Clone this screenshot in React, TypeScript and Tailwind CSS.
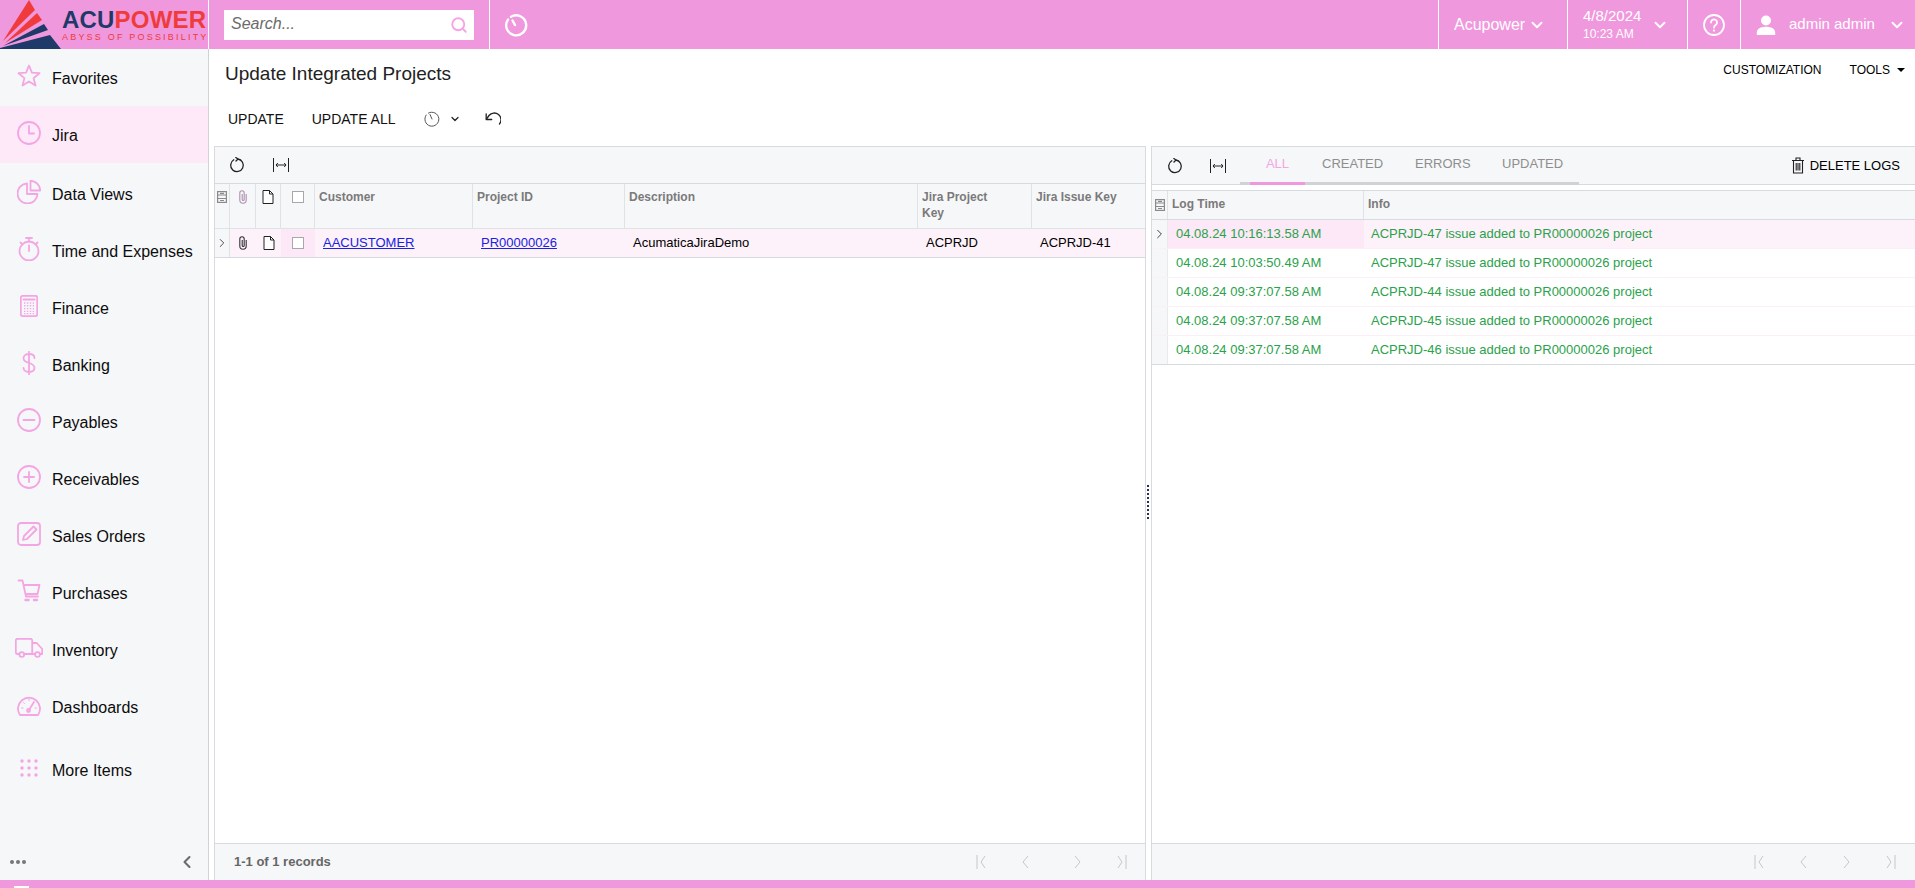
import React from "react";
import { ChevronDown, ChevronLeft, ChevronRight, Search } from "lucide-react";

const P = "#f4a5e3";

function Ic({ children, w = 24, h = 24, vb = "0 0 24 24", sw = 1.8, color = P, fill = "none" }: { children: React.ReactNode; w?: number; h?: number; vb?: string; sw?: number; color?: string; fill?: string }) {
  return (
    <svg width={w} height={h} viewBox={vb} fill={fill} stroke={color} strokeWidth={sw} strokeLinecap="round" strokeLinejoin="round" className="shrink-0">
      {children}
    </svg>
  );
}

const navIcons: Record<string, React.ReactNode> = {
  Favorites: <Ic><path d="M12 1.500l2.900 7.200 7.600.5-5.900 4.900 1.900 7.500L12 17.500l-6.500 4.100 1.900-7.500-5.900-4.900 7.600-.5z" /></Ic>,
  Jira: <Ic><circle cx="12" cy="12" r="11" /><path d="M12 5v7.500h5" /></Ic>,
  "Data Views": <Ic><path d="M10 3.500a10 10 0 1 0 10.500 10.500H10z" /><path d="M13.500 0.800a10 10 0 0 1 9.700 9.700h-9.700z" /></Ic>,
  "Time and Expenses": <Ic><circle cx="12" cy="14" r="9.500" /><path d="M9 1h6M12 1v3.500M12 8.500V14M3.500 5.500l2 2M20.500 5.500l-2 2" /></Ic>,
  Finance: <Ic w={18} h={22} vb="0 0 18 22"><rect x="0.800" y="0.800" width="16.400" height="20.400" rx="2" /><path d="M3.500 4.500h11" strokeWidth="2" /><path d="M4 8h10M4 10.800h10M4 13.600h10M4 16.400h10M4 18.600h10" strokeWidth="1.400" strokeDasharray="1.400 1.500" strokeLinecap="butt" /></Ic>,
  Banking: <Ic w={14} h={24} vb="0 0 14 24"><path d="M12.500 7c0-2.500-2.300-4-5.500-4S1.500 4.700 1.500 7.200c0 6 11 3.600 11 9.600 0 2.600-2.400 4.200-5.500 4.200s-5.500-1.600-5.500-4.200M7 .8v22.400" /></Ic>,
  Payables: <Ic><circle cx="12" cy="12" r="11" /><path d="M6.500 12h11" /></Ic>,
  Receivables: <Ic><circle cx="12" cy="12" r="11" /><path d="M7 12h10M12 7v10" /></Ic>,
  "Sales Orders": <Ic><rect x="1" y="1" width="22" height="22" rx="3" /><path d="M6 18l1-4L16.500 4.500l3 3L10 17z" /></Ic>,
  Purchases: <Ic><path d="M1.500 1.500h4l3.500 16h12M6.500 6h16l-2 9H8.500" /><path d="M8.500 21h3M17 21h3" strokeWidth="2.400" /></Ic>,
  Inventory: <Ic w={28} h={20} vb="0 0 28 20"><path d="M4.500 16H2.500a1.700 1.700 0 0 1-1.700-1.700V2.500A1.700 1.700 0 0 1 2.500.8h13a1.700 1.700 0 0 1 1.700 1.700V16H9M17.200 5h4.500l5.500 6v5h-2M20 16h-2.800" /><circle cx="6.800" cy="16.500" r="2.400" /><circle cx="22.500" cy="16.500" r="2.400" /></Ic>,
  Dashboards: <Ic h={21} vb="0 0 24 21"><path d="M3 20a11 11 0 1 1 18 0z" /><path d="M12 15l5-8" /><circle cx="11.500" cy="15.500" r="1.500" /><path d="M4.500 13h1.500M6.500 7.500l1 1M12 4v1.500M18 13h1.500" strokeWidth="1" /></Ic>,
  "More Items": (
    <svg width="18" height="18" viewBox="0 0 18 18" fill={P} className="shrink-0">
      {[2, 9, 16].flatMap((y) => [2, 9, 16].map((x) => <circle key={`${x}-${y}`} cx={x} cy={y} r="1.700" />))}
    </svg>
  ),
};

const navTop = ["Favorites", "Jira", "Data Views", "Time and Expenses", "Finance", "Banking", "Payables", "Receivables", "Sales Orders", "Purchases", "Inventory", "Dashboards"];

function NavItem({ label, active, extra }: { label: string; active?: boolean; extra?: string }) {
  return (
    <div className={`relative flex items-center h-[57px] shrink-0 pl-[52px] pt-[2px] text-[16px] text-[#0c0c0c] ${active ? "bg-[#fde9f8]" : ""} ${extra ?? ""}`}>
      <span className="absolute left-[17px] top-[15px] w-[24px] h-[24px] flex items-center justify-center">{navIcons[label]}</span>
      {label}
    </div>
  );
}

function Logo() {
  return (
    <div className="relative w-[208px] h-[49px] shrink-0 overflow-hidden">
      <svg width="62" height="49" viewBox="0 0 62 49" className="absolute left-0 top-0">
        <path d="M29 0L35 10 3 41z" fill="#ef3b3b" />
        <path d="M37 13L42 20 5 43z" fill="#ef3b3b" />
        <path d="M44 24L48 30 3 46z" fill="#1f3a68" />
        <path d="M50 35L61 49 H0 V48z" fill="#1f3a68" />
      </svg>
      <div className="absolute left-[62px] top-[6px] text-[24px] leading-[28px] font-bold whitespace-nowrap tracking-[0.2px]">
        <span className="text-[#1f3a68]">ACU</span>
        <span className="text-[#ef3b3b]">POWER</span>
      </div>
      <div className="absolute left-[62px] top-[31px] text-[9px] leading-[12px] text-[#ef3b3b] tracking-[2.2px] whitespace-nowrap">ABYSS OF POSSIBILITY</div>
    </div>
  );
}

function HeaderCell({ w, children, className }: { w: number; children: React.ReactNode; className?: string }) {
  return (
    <div style={{ width: w }} className={`h-full shrink-0 border-l border-white flex items-center text-white ${className ?? ""}`}>
      {children}
    </div>
  );
}

function Header() {
  return (
    <header className="flex h-[49px] shrink-0 bg-[#f098dd] items-center">
      <Logo />
      <div className="h-full w-[281px] shrink-0 border-l border-white pl-[15px] flex items-center">
        <div className="w-[250px] h-[30px] bg-white flex items-center justify-between pl-[7px] pr-[6px]">
          <span className="italic text-[16px] text-[#6b6b6b] pb-[2px]">Search...</span>
          <Search size={18} color={P} strokeWidth={2.500} />
        </div>
      </div>
      <HeaderCell w={53} className="justify-center">
        <Ic color="#ffffff" sw={2.400}>
          <path d="M7 3.800a10 10 0 1 1-3 2.800" />
          <path d="M11 12L8.500 7.500" />
        </Ic>
      </HeaderCell>
      <div className="flex-1" />
      <HeaderCell w={129} className="pl-[15px]">
        <span className="text-[16px]">Acupower</span>
        <ChevronDown size={18} strokeWidth={2.500} className="ml-[3px]" />
      </HeaderCell>
      <HeaderCell w={120} className="pl-[15px]">
        <div className="flex flex-col w-[68px]">
          <span className="text-[15px] leading-[18px]">4/8/2024</span>
          <span className="text-[12px] leading-[16px] mt-[1px]">10:23 AM</span>
        </div>
        <ChevronDown size={18} strokeWidth={2.500} />
      </HeaderCell>
      <HeaderCell w={53} className="justify-center">
        <Ic color="#ffffff" sw={1.800}>
          <circle cx="12" cy="12" r="10" />
          <path d="M9 9.500a3 3 0 1 1 4.600 2.500c-1 .7-1.600 1.300-1.600 2.500" />
          <path d="M12 17.500v.1" strokeWidth="2.200" />
        </Ic>
      </HeaderCell>
      <HeaderCell w={175} className="pl-[15px]">
        <svg width="20" height="20" viewBox="0 0 24 24" fill="#fff" className="shrink-0">
          <circle cx="12" cy="6.500" r="6" />
          <path d="M1 24v-3c0-4.500 4.500-7 11-7s11 2.500 11 7v3z" />
        </svg>
        <span className="text-[15px] ml-[13px]">admin admin</span>
        <ChevronDown size={18} strokeWidth={2.500} className="ml-[13px]" />
      </HeaderCell>
    </header>
  );
}

const Refresh = () => (
  <Ic w={16} h={16} vb="0 0 16 16" color="#222222" sw={1.300}>
    <path d="M4.800 2.800a6.300 6.300 0 1 0 4-.8" />
    <path d="M6.800 0.500L9 2 7 4" />
  </Ic>
);
const Fit = () => (
  <Ic w={16} h={14} vb="0 0 16 14" color="#222222" sw={1}>
    <path d="M.5 0v14M15.500 0v14M3 7h10M4.800 5L3 7l1.800 2M11.200 5L13 7l-1.800 2" strokeLinecap="butt" />
  </Ic>
);
const GroupIcon = () => (
  <svg width="10" height="12" viewBox="0 0 10 12" fill="none" stroke="#8a8a8a" strokeWidth="1.200">
    <rect x=".6" y=".6" width="8.800" height="10.800" />
    <path d="M.6 4h8.800M.6 7.500h8.800M3 2.300h4M3 9.500h4" />
  </svg>
);
const Clip = ({ c }: { c: string }) => (
  <svg width="10" height="14" viewBox="0 0 10 14" fill="none" stroke={c} strokeWidth="1.100">
    <path d="M8.200 4v6a3.200 3.200 0 0 1-6.400 0V3a2.200 2.200 0 0 1 4.400 0v6.500a1 1 0 0 1-2 0V4" />
  </svg>
);
const Doc = () => (
  <svg width="12" height="14" viewBox="0 0 12 14" fill="#fff" stroke="#222" strokeWidth="1">
    <path d="M1 .5h6.500L11 4v9.500H1z" />
    <path d="M7.500 .5V4H11" fill="none" />
  </svg>
);
const Check = () => <span className="block w-[12px] h-[12px] border border-[#a8a8a8] bg-white" />;

const colsL = [15, 26, 25, 34, 158, 152, 293, 114, 115];

function Cell({ w, children, className }: { w: number; children?: React.ReactNode; className?: string }) {
  return (
    <div style={{ width: w }} className={`shrink-0 h-full border-r border-[#e0e3e6] ${className ?? ""}`}>
      {children}
    </div>
  );
}

function Pager({ className, mid }: { className: string; mid?: string }) {
  const c = "#c4c7ca";
  return (
    <div className={`flex items-center ${className}`}>
      <svg width="10" height="14" viewBox="0 0 10 14" fill="none" stroke={c}><path d="M1 0v14M9 1L5 7l4 6" /></svg>
      <svg width="10" height="14" viewBox="0 0 10 14" fill="none" stroke={c}><path d="M8 1L3 7l5 6" /></svg>
      <svg width="10" height="14" viewBox="0 0 10 14" fill="none" stroke={c} className={mid}><path d="M2 1l5 6-5 6" /></svg>
      <svg width="10" height="14" viewBox="0 0 10 14" fill="none" stroke={c}><path d="M9 0v14M1 1l4 6-4 6" /></svg>
    </div>
  );
}

function LeftPanel() {
  const th = "text-[12px] font-bold text-[#7a7a7a] leading-[16px] pt-[5px] pl-[4px]";
  return (
    <section className="w-[932px] shrink-0 flex flex-col border-x border-t border-[#d8dbde]">
      <div className="h-[37px] shrink-0 bg-[#f6f7f9] border-b border-[#d8dbde] flex items-center pl-[14px] gap-[28px]">
        <Refresh />
        <Fit />
      </div>
      <div className="h-[45px] shrink-0 flex bg-[#f6f7f9] border-b border-[#e0e3e6]">
        <Cell w={colsL[0]} className="flex justify-center pt-[7px]"><GroupIcon /></Cell>
        <Cell w={colsL[1]} className="flex justify-center pt-[6px]"><Clip c="#b08fb0" /></Cell>
        <Cell w={colsL[2]} className="flex justify-center pt-[6px]"><Doc /></Cell>
        <Cell w={colsL[3]} className="flex justify-center pt-[7px]"><Check /></Cell>
        <Cell w={colsL[4]} className={th}>Customer</Cell>
        <Cell w={colsL[5]} className={th}>Project ID</Cell>
        <Cell w={colsL[6]} className={th}>Description</Cell>
        <Cell w={colsL[7]} className={th}>Jira Project<br />Key</Cell>
        <Cell w={colsL[8]} className={`${th} border-r-0`}>Jira Issue Key</Cell>
      </div>
      <div className="h-[29px] shrink-0 flex items-center bg-[#fdf1fa] border-b border-[#d8dbde] text-[13px] text-black">
        <Cell w={colsL[0]} className="flex items-center justify-center bg-[#f6f7f9]"><ChevronRight size={16} color="#444" strokeWidth={1.600} /></Cell>
        <Cell w={colsL[1]} className="flex items-center justify-center border-r-0"><Clip c="#333" /></Cell>
        <Cell w={colsL[2]} className="flex items-center justify-center border-r-0"><Doc /></Cell>
        <Cell w={colsL[3]} className="flex items-center justify-center bg-[#fce8f6] border-r-0"><Check /></Cell>
        <Cell w={colsL[4]} className="flex items-center pl-[8px] border-r-0"><span className="underline text-[#1a22e0]">AACUSTOMER</span></Cell>
        <Cell w={colsL[5]} className="flex items-center pl-[8px] border-r-0"><span className="underline text-[#1a22e0]">PR00000026</span></Cell>
        <Cell w={colsL[6]} className="flex items-center pl-[8px] border-r-0">AcumaticaJiraDemo</Cell>
        <Cell w={colsL[7]} className="flex items-center pl-[8px] border-r-0">ACPRJD</Cell>
        <Cell w={colsL[8]} className="flex items-center pl-[8px] border-r-0">ACPRJD-41</Cell>
      </div>
      <div className="flex-1" />
      <div className="h-[37px] shrink-0 bg-[#f6f7f9] border-t border-[#d8dbde] flex items-center justify-between pl-[19px]">
        <span className="text-[13px] font-bold text-[#666666]">1-1 of 1 records</span>
        <Pager className="gap-[34px] pr-[18px]" mid="ml-[9px]" />
      </div>
    </section>
  );
}

const logs: [string, string][] = [
  ["04.08.24 10:16:13.58 AM", "ACPRJD-47 issue added to PR00000026 project"],
  ["04.08.24 10:03:50.49 AM", "ACPRJD-47 issue added to PR00000026 project"],
  ["04.08.24 09:37:07.58 AM", "ACPRJD-44 issue added to PR00000026 project"],
  ["04.08.24 09:37:07.58 AM", "ACPRJD-45 issue added to PR00000026 project"],
  ["04.08.24 09:37:07.58 AM", "ACPRJD-46 issue added to PR00000026 project"],
];

function RightPanel() {
  const tab = "h-full flex items-center text-[13px] text-[#8e8e8e] pb-[1px]";
  return (
    <section className="flex-1 min-w-0 flex flex-col border-l border-t border-[#d8dbde]">
      <div className="h-[38px] shrink-0 bg-[#f6f7f9] flex items-center pl-[15px] pr-[15px] border-b border-[#d8dbde]">
        <Refresh />
        <span className="ml-[27px]"><Fit /></span>
        <div className="ml-[14px] flex h-full border-b-[3px] border-[#d0d3d6] w-[339px] pl-[10px] -mb-[1px]">
          <div className="relative h-full w-[55px] flex items-center justify-center text-[13px] text-[#f4a5e3] pb-[1px] mr-[17px]">
            ALL
            <span className="absolute left-0 right-0 -bottom-[3px] h-[3px] bg-[#f098dd]" />
          </div>
          <div className={`${tab} w-[93px]`}>CREATED</div>
          <div className={`${tab} w-[87px]`}>ERRORS</div>
          <div className={tab}>UPDATED</div>
        </div>
        <div className="ml-auto flex items-center gap-[5px] text-[13px] text-black">
          <svg width="14" height="17" viewBox="0 0 14 17" fill="none" stroke="#222" strokeWidth="1.100">
            <path d="M1 3.500h12M5 3.500V1h4v2.500M2.500 3.500v12.500h9V3.500M5.200 6v7.500M7 6v7.500M8.800 6v7.500" />
          </svg>
          DELETE LOGS
        </div>
      </div>
      <div className="h-[5px] shrink-0" />
      <div className="h-[30px] shrink-0 flex bg-[#f6f7f9] border-y border-[#d8dbde] text-[12px] font-bold text-[#7a7a7a]">
        <Cell w={16} className="flex items-center justify-center"><GroupIcon /></Cell>
        <Cell w={196} className="flex items-center pl-[4px] pb-[2px]">Log Time</Cell>
        <div className="flex items-center pl-[4px] pb-[2px]">Info</div>
      </div>
      {logs.map(([t, m], i) => (
        <div key={i} className={`h-[29px] shrink-0 flex items-center text-[13px] text-[#2aa24a] border-b ${i === 4 ? "border-[#d8dbde]" : "border-[#fbf0f8]"} ${i === 0 ? "bg-[#fdf1fa]" : ""}`}>
          <Cell w={16} className="flex items-center justify-center bg-[#f6f7f9] border-[#e8eaec]">{i === 0 && <ChevronRight size={16} color="#444" strokeWidth={1.600} />}</Cell>
          <div className={`h-full w-[196px] shrink-0 flex items-center pl-[8px] ${i === 0 ? "bg-[#fce8f6]" : ""}`}>{t}</div>
          <div className="pl-[7px]">{m}</div>
        </div>
      ))}
      <div className="flex-1" />
      <div className="h-[37px] shrink-0 bg-[#f6f7f9] border-t border-[#d8dbde] flex items-center justify-end">
        <Pager className="gap-[34px] pr-[19px]" />
      </div>
    </section>
  );
}

export default function App() {
  return (
    <div className="w-[1915px] h-[888px] overflow-hidden flex flex-col bg-white font-['Liberation_Sans',Arial,sans-serif]">
      <Header />
      <div className="flex flex-1 min-h-0">
        <aside className="w-[209px] shrink-0 bg-[#f6f7f9] border-r border-[#d0d3d6] flex flex-col">
          {navTop.map((n) => <NavItem key={n} label={n} active={n === "Jira"} extra={n === "Data Views" ? "mt-[2px]" : ""} />)}
          <NavItem label="More Items" extra="mt-[6px]" />
          <div className="mt-auto h-[36px] flex items-center justify-between pl-[10px] pr-[11px]">
            <span className="flex gap-[2px]">
              <i className="block w-[4px] h-[4px] rounded-full bg-[#777]" />
              <i className="block w-[4px] h-[4px] rounded-full bg-[#777]" />
              <i className="block w-[4px] h-[4px] rounded-full bg-[#777]" />
            </span>
            <ChevronLeft size={20} color="#6b6b6b" strokeWidth={2.500} />
          </div>
        </aside>
        <main className="flex-1 min-w-0 flex flex-col">
          <div className="h-[40px] shrink-0 flex items-start justify-between pl-[16px] pr-[10px]">
            <h1 className="text-[19px] leading-[24px] mt-[13px] text-[#222] font-normal">Update Integrated Projects</h1>
            <div className="flex items-center text-[12px] text-black mt-[12px]">
              <span>CUSTOMIZATION</span>
              <span className="ml-[28px]">TOOLS</span>
              <span className="ml-[7px] w-0 h-0 border-x-[4px] border-x-transparent border-t-[4px] border-t-black" />
            </div>
          </div>
          <div className="h-[57px] shrink-0 flex items-start pt-[19px] pl-[19px] text-[14px] text-[#111]">
            <span className="leading-[22px]">UPDATE</span>
            <span className="leading-[22px] ml-[28px]">UPDATE ALL</span>
            <span className="ml-[28px] h-[22px] flex items-center">
              <Ic w={16} h={16} vb="0 0 16 16" color="#555" sw={1}>
                <path d="M4.500 2a7 7 0 1 1-2.300 2" />
                <path d="M8 8L6 3.500" />
              </Ic>
            </span>
            <span className="ml-[9px] h-[22px] flex items-center"><ChevronDown size={12} color="#222" strokeWidth={2.500} /></span>
            <span className="ml-[24px] h-[22px] flex items-center">
              <Ic w={16} h={14} vb="0 0 16 14" color="#222" sw={1.300}>
                <path d="M14.500 12a6.500 6.500 0 0 0-10.500-8.500L1.500 7" />
                <path d="M1.200 2v5.500h5.500" />
              </Ic>
            </span>
          </div>
          <div className="flex-1 min-h-0 flex pl-[5px]">
            <LeftPanel />
            <div className="w-[5px] shrink-0 relative">
              <div className="absolute left-[1px] top-[339px] w-[2px] h-[36px] bg-[repeating-linear-gradient(to_bottom,#27305a_0,#27305a_2px,transparent_2px,transparent_4px)]" />
            </div>
            <RightPanel />
          </div>
        </main>
      </div>
      <footer className="h-[8px] shrink-0 bg-[#f098dd] flex items-end pl-[14px]">
        <span className="block w-[15px] h-[2px] bg-white" />
      </footer>
    </div>
  );
}
